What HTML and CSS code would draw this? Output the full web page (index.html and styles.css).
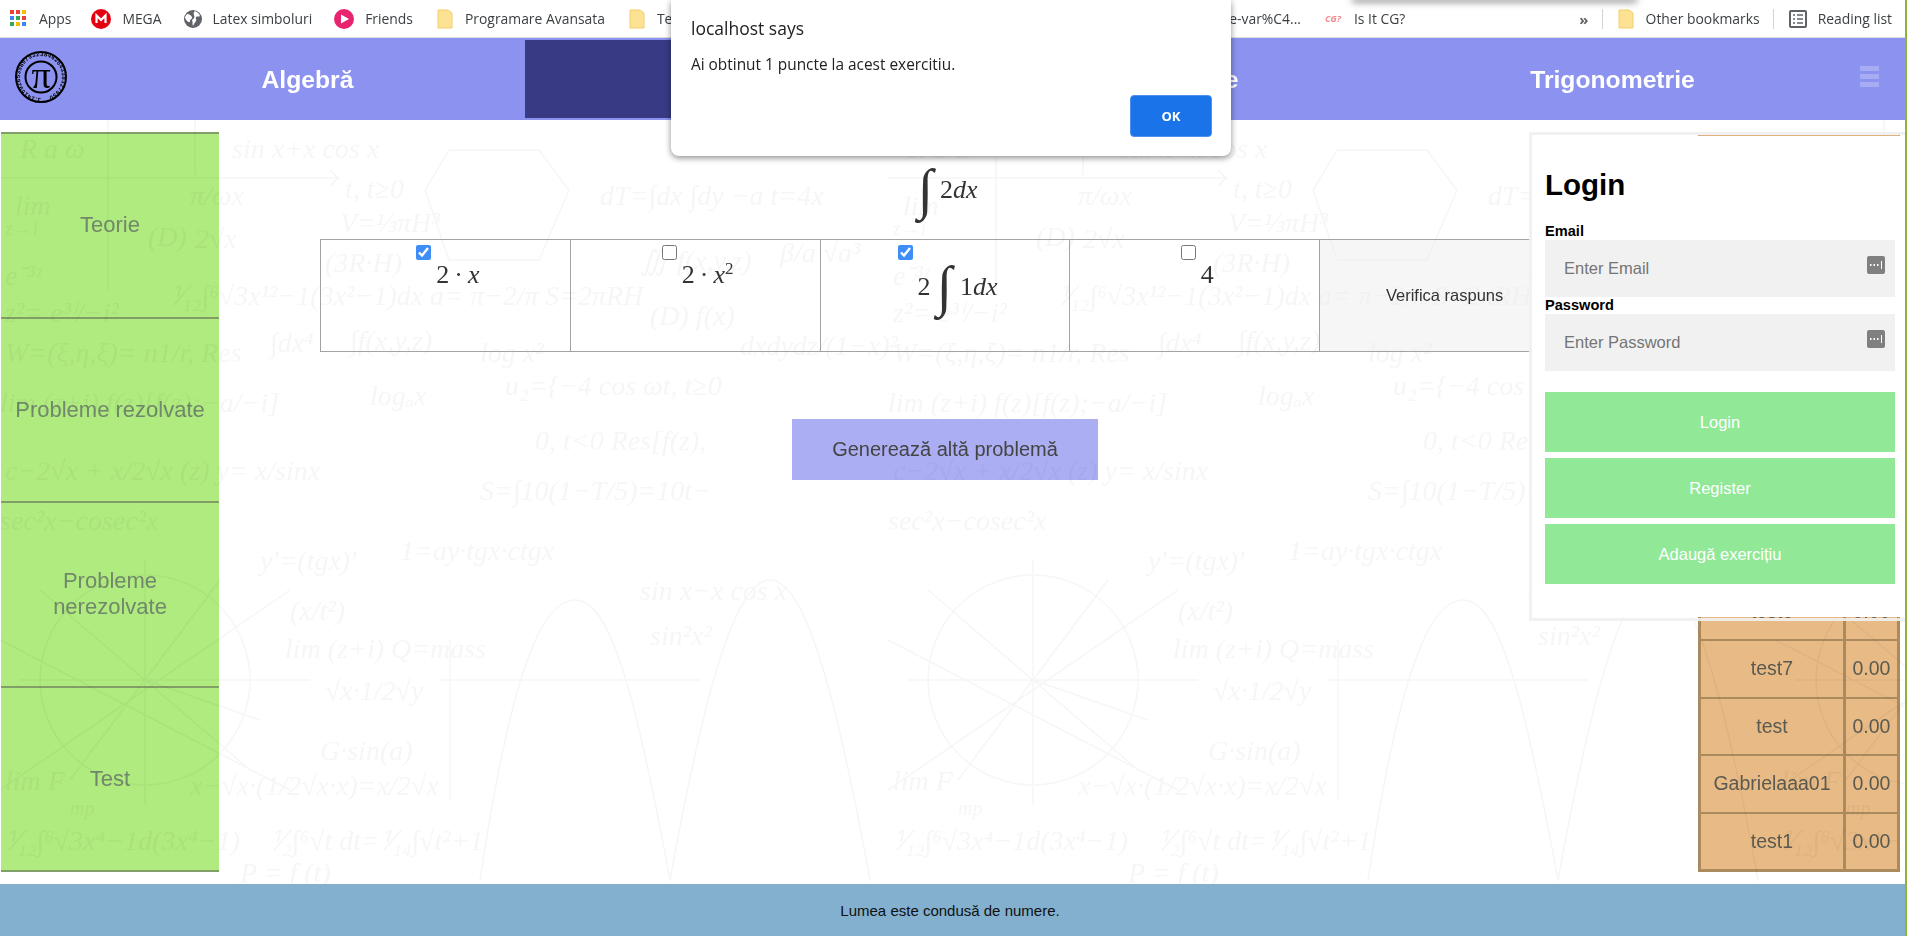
FILE: index.html
```html
<!DOCTYPE html>
<html lang="ro">
<head>
    <meta charset="UTF-8">
    <title>Analiză</title>
    <link rel="stylesheet" href="styles.css">
</head>
<body>
    <!-- bara de bookmarks -->
    <div class="bookmarks">
        <div class="bm apps">
            <svg width="17" height="17" viewBox="0 0 17 17">
                <rect x="0" y="0" width="4" height="4" fill="#ea4335"/><rect x="6" y="0" width="4" height="4" fill="#ea4335"/><rect x="12" y="0" width="4" height="4" fill="#fbbc04"/>
                <rect x="0" y="6" width="4" height="4" fill="#4285f4"/><rect x="6" y="6" width="4" height="4" fill="#34a853"/><rect x="12" y="6" width="4" height="4" fill="#ea4335"/>
                <rect x="0" y="12" width="4" height="4" fill="#34a853"/><rect x="6" y="12" width="4" height="4" fill="#fbbc04"/><rect x="12" y="12" width="4" height="4" fill="#4285f4"/>
            </svg>
            <span>Apps</span>
        </div>
        <div class="bm mega">
            <svg width="20" height="20" viewBox="0 0 20 20">
                <circle cx="10" cy="10" r="10" fill="#e3000f"/>
                <path d="M5.500 14V6.500L10 11l4.500-4.500V14" fill="none" stroke="#fff" stroke-width="2.200"/>
            </svg>
            <span>MEGA</span>
        </div>
        <div class="bm latex">
            <svg width="18" height="18" viewBox="0 0 18 18">
                <circle cx="9" cy="9" r="9" fill="#5f6368"/>
                <path d="M3 4c2 0 4 1 5 3s-2 2-2 4-2 1-3 0-2-3-2-4zM11 1c2 1 4 2 5 5-1 1-3 0-4 1s1 3 0 4-2 3-3 5c-1-2 0-4-1-6 2-1 3-3 2-5s0-3 1-4z" fill="#fff"/>
            </svg>
            <span>Latex simboluri</span>
        </div>
        <div class="bm friends">
            <svg width="20" height="20" viewBox="0 0 20 20">
                <circle cx="10" cy="10" r="10" fill="#e8246e"/>
                <path d="M7 5.500l8 4.500-8 4.500z" fill="#fff"/>
            </svg>
            <span>Friends</span>
        </div>
        <div class="bm prog">
            <svg class="folder" width="16" height="20" viewBox="0 0 16 20"><path d="M1 1h10l4 3v15H1z" fill="#fde293" stroke="#f2d06b"/></svg>
            <span>Programare Avansata</span>
        </div>
        <div class="bm tehnici">
            <svg class="folder" width="16" height="20" viewBox="0 0 16 20"><path d="M1 1h10l4 3v15H1z" fill="#fde293" stroke="#f2d06b"/></svg>
            <span>Te</span>
        </div>
        <div class="bm long"><span>e-var%C4...</span></div>
        <div class="bm cg">
            <span class="cg-logo">CG?</span>
            <span>Is It CG?</span>
        </div>
        <div class="more">»</div>
        <div class="bar-sep"></div>
        <div class="bm other">
            <svg class="folder" width="16" height="20" viewBox="0 0 16 20"><path d="M1 1h10l4 3v15H1z" fill="#fde293" stroke="#f2d06b"/></svg>
            <span>Other bookmarks</span>
        </div>
        <div class="bar-sep"></div>
        <div class="bm reading">
            <svg width="18" height="18" viewBox="0 0 18 18">
                <rect x="1" y="1" width="16" height="16" rx="1" fill="none" stroke="#5f6368" stroke-width="2"/>
                <path d="M4 5h2M8 5h6M4 9h2M8 9h6M4 13h2M8 13h6" stroke="#5f6368" stroke-width="1.500"/>
            </svg>
            <span>Reading list</span>
        </div>
    </div>

    <!-- meniu -->
    <nav class="topnav">
        <div class="logo">
            <svg width="54" height="54" viewBox="0 0 54 54">
                <defs><path id="digits" d="M27 48a21 21 0 1 1 0.010 0"/></defs>
                <circle cx="27" cy="27" r="25" fill="none" stroke="#000" stroke-width="2"/>
                <circle cx="27" cy="27" r="15.500" fill="none" stroke="#000" stroke-width="2"/>
                <text class="logo-digits"><textPath href="#digits">3.14159265358979323846264338327950</textPath></text>
                <text class="logo-pi" x="27" y="38" text-anchor="middle">π</text>
            </svg>
        </div>
        <a class="tab">Algebră</a>
        <a class="tab active" aria-label="Analiză"></a>
        <a class="tab">Geometrie</a>
        <a class="tab">Trigonometrie</a>
        <div class="menu-icon"><span></span><span></span><span></span></div>
    </nav>

    <div class="content">
        <!-- fundal cu formule -->
        <svg class="formulas" width="1908" height="764" viewBox="0 120 1908 764">
            <defs>
                <g id="tile">
                    <text x="20" y="158">R a ω</text>
                    <text x="232" y="158">sin x+x cos x</text>
                    <path d="M0 178H340M108 120V290M195 120V175M330 170l8 8-8 8"/>
                    <text x="15" y="215">lim</text>
                    <text class="small" x="5" y="235">z→i</text>
                    <text x="190" y="205">π/ωx</text>
                    <text x="195" y="248">2√x</text>
                    <text x="148" y="246">(D)</text>
                    <text x="345" y="198">t, t≥0</text>
                    <text x="340" y="232">V=⅓πH³</text>
                    <path d="M425 190l24-40 90 0 30 40-30 70-90 0z"/>
                    <text x="600" y="205">dT=∫dx ∫dy −a t=4x</text>
                    <text x="640" y="270">∭ f(x,y,z)</text>
                    <text x="325" y="272">(3R·H)</text>
                    <text x="780" y="262">β/a √a³</text>
                    <text x="5" y="285">e⁻³ᶻ</text>
                    <text x="5" y="322">z²= e³ⁱ/−i²</text>
                    <text x="170" y="305">⅟₁₂∫⁶√3x¹²−1(3x²−1)dx</text>
                    <text x="430" y="305">a= π−2/π</text>
                    <text x="545" y="305">S=2πRH</text>
                    <text x="650" y="325">(D) f(x)</text>
                    <text x="740" y="355">dxdydz/(1−x)²</text>
                    <text x="5" y="362">W=(ξ,η,ξ)= n1/r, Res</text>
                    <text x="270" y="352">∫dx⁴</text>
                    <text x="350" y="350">∫f(x,y,z)</text>
                    <text x="480" y="362">log x²</text>
                    <text x="0" y="412">lim (z+i) f(z)[f(z);−a/−i]</text>
                    <text x="370" y="405">logₐx</text>
                    <text x="505" y="395">u₂={−4 cos ωt, t≥0</text>
                    <text x="535" y="450">0, t&lt;0 Res[f(z),</text>
                    <text x="5" y="480">c−2√x + x/2√x (z) y= x/sinx</text>
                    <text x="480" y="500">S=∫10(1−T/5)=10t−</text>
                    <text x="0" y="530">sec²x−cosec²x</text>
                    <text x="400" y="560">1=ay·tgx·ctgx</text>
                    <text x="260" y="570">y'=(tgx)'</text>
                    <text x="640" y="600">sin x−x cos x</text>
                    <text x="650" y="645">sin²x²</text>
                    <text x="290" y="620">(x/t²)</text>
                    <text x="285" y="658">lim (z+i) Q=mass</text>
                    <text x="325" y="700">√x·1/2√y</text>
                    <text x="320" y="760">G·sin(a)</text>
                    <text x="5" y="790">lim F</text>
                    <text class="small" x="70" y="815">mp</text>
                    <text x="190" y="795">x−√x·(1/2√x·x)=x/2√x</text>
                    <text x="5" y="850">⅟₁₂∫⁶√3x⁴−1d(3x⁴−1)</text>
                    <text x="270" y="850">⅟₂∫⁶√t dt=⅟₁₄∫√t²+1</text>
                    <text x="240" y="882">P = f (t)</text>
                    <path d="M0 640L290 790M0 790L290 590M145 560V805M40 590L250 770M20 680H310M145 680L70 780M145 680L220 580M145 680L260 720"/>
                    <circle cx="145" cy="680" r="105"/>
                    <path d="M440 680H700M450 800V640M670 880c40-220 70-300 100-300s60 80 100 300M480 880c30-200 60-280 95-280s60 90 95 280"/>
                </g>
            </defs>
            <use href="#tile" x="0"/>
            <use href="#tile" x="888"/>
            <use href="#tile" x="1776"/>
        </svg>

        <aside class="sidebar">
            <a class="side-item">Teorie</a>
            <a class="side-item">Probleme rezolvate</a>
            <a class="side-item">Probleme nerezolvate</a>
            <a class="side-item">Test</a>
        </aside>

        <main class="exercise">
            <div class="formula question"><span class="int">∫</span><span>2<i>dx</i></span></div>
            <table class="answers">
                <tr>
                    <td><div class="answer"><input type="checkbox" checked><div class="formula"><span>2</span><span class="dot">·</span><i>x</i></div></div></td>
                    <td><div class="answer"><input type="checkbox"><div class="formula"><span>2</span><span class="dot">·</span><i>x</i><sup>2</sup></div></div></td>
                    <td><div class="answer"><input type="checkbox" checked><div class="formula"><span>2</span><span class="int wide">∫</span><span>1<i>dx</i></span></div></div></td>
                    <td><div class="answer"><input type="checkbox"><div class="formula"><span>4</span></div></div></td>
                    <td class="verify">Verifica raspuns</td>
                </tr>
            </table>
            <button class="generate">Generează altă problemă</button>
        </main>

        <aside class="ranking">
            <table>
                <tr><td>Nume</td><td>Scor</td></tr>
                <tr><td>Andrei</td><td>9.50</td></tr>
                <tr><td>Maria</td><td>8.00</td></tr>
                <tr><td>test2</td><td>6.00</td></tr>
                <tr><td>test3</td><td>4.00</td></tr>
                <tr><td>test4</td><td>2.00</td></tr>
                <tr><td>test5</td><td>1.00</td></tr>
                <tr><td>test8</td><td>0.50</td></tr>
                <tr><td>test6</td><td>0.00</td></tr>
                <tr><td>test7</td><td>0.00</td></tr>
                <tr><td>test</td><td>0.00</td></tr>
                <tr><td>Gabrielaaa01</td><td>0.00</td></tr>
                <tr><td>test1</td><td>0.00</td></tr>
            </table>
        </aside>

        <!-- peste clasament -->
        <div class="login-panel">
            <div class="login-inner">
                <h2>Login</h2>
                <label>Email</label>
                <div class="field">
                    <input type="text" placeholder="Enter Email">
                    <svg class="key" width="18" height="18" viewBox="0 0 18 18"><rect width="18" height="18" rx="2" fill="#808080"/><path d="M3 9h1.500M6.500 9H8M10 9h1.500" stroke="#fff" stroke-width="2"/><path d="M14.500 5v8" stroke="#fff"/></svg>
                </div>
                <label>Password</label>
                <div class="field">
                    <input type="text" placeholder="Enter Password">
                    <svg class="key" width="18" height="18" viewBox="0 0 18 18"><rect width="18" height="18" rx="2" fill="#808080"/><path d="M3 9h1.500M6.500 9H8M10 9h1.500" stroke="#fff" stroke-width="2"/><path d="M14.500 5v8" stroke="#fff"/></svg>
                </div>
                <button class="login-btn first">Login</button>
                <button class="login-btn">Register</button>
                <button class="login-btn">Adaugă exercițiu</button>
            </div>
        </div>
    </div>

    <footer class="page-footer">Lumea este condusă de numere.</footer>

    <!-- alert-ul browserului -->
    <div class="dialog">
        <div class="dialog-title">localhost says</div>
        <div class="dialog-text">Ai obtinut 1 puncte la acest exercitiu.</div>
        <div class="dialog-actions"><button class="ok">OK</button></div>
    </div>
    <div class="window-shadow"></div>
    <div class="screen-edge"></div>
</body>
</html>
```
FILE: styles.css
```css
html, body {
    margin: 0;
    height: 936px;
    overflow: hidden;
}

body {
    position: relative;
    display: flex;
    flex-direction: column;
    background-color: white;
    font-family: "Liberation Sans", Arial, sans-serif;
}

/* bookmarks */
.bookmarks {
    height: 37px;
    flex: none;
    border-bottom: 1px solid #dedfe1;
    display: flex;
    align-items: center;
    padding-right: 16px;
    font-family: "Open Sans", sans-serif;
    font-size: 13.9px;
    color: #3c4043;
    white-space: nowrap;
}

.bm {
    display: flex;
    align-items: center;
    flex: none;
}

.apps { margin-left: 10px; gap: 12px; }
.mega { margin-left: 20px; gap: 11px; }
.latex { margin-left: 22px; gap: 11px; }
.friends { margin-left: 22px; gap: 11px; }
.prog { margin-left: 24px; gap: 12px; }
.tehnici { margin-left: 24px; gap: 12px; }
.long { flex: 1; justify-content: flex-end; }
.cg { margin-left: 24px; gap: 9px; }
.other { gap: 12px; margin-left: 15px; }
.reading { gap: 11px; margin-left: 15px; }

.cg-logo {
    width: 20px;
    font-size: 9px;
    font-style: italic;
    font-weight: bold;
    color: #f28b92;
}

.more {
    margin-left: 174px;
    font-size: 15px;
    font-weight: bold;
    color: #5f6368;
}

.bar-sep {
    width: 1px;
    height: 20px;
    margin-left: 13px;
    background-color: #d3d4d6;
}

/* meniu */
.topnav {
    height: 82px;
    flex: none;
    background-color: #8b92ef;
    display: flex;
    align-items: stretch;
    position: relative;
}

.logo {
    width: 90px;
    flex: none;
    padding: 12px 0 0 14px;
    box-sizing: border-box;
}

.logo-digits {
    font-family: "Liberation Sans", sans-serif;
    font-size: 6px;
    font-weight: bold;
    letter-spacing: 0.35px;
}

.logo-pi {
    font-family: "Liberation Serif", serif;
    font-size: 38px;
}

.tab {
    width: 435px;
    flex: none;
    display: flex;
    align-items: center;
    justify-content: center;
    padding-top: 2px;
    box-sizing: border-box;
    font-size: 24.7px;
    font-weight: bold;
    color: white;
}

.tab.active {
    background-color: #383b84;
    margin: 2px 0;
}

.menu-icon {
    margin: 28px 0 0 30px;
    width: 19px;
    display: flex;
    flex-direction: column;
    gap: 3px;
}

.menu-icon span {
    height: 5px;
    background-color: rgba(255, 255, 255, 0.25);
}

/* continut */
.content {
    flex: 1;
    position: relative;
    display: flex;
    align-items: flex-start;
    min-height: 0;
}

.formulas {
    position: absolute;
    top: 0;
    left: 0;
}

.formulas text {
    font-family: "Liberation Serif", serif;
    font-style: italic;
    font-size: 28px;
    fill: #f6f6f6;
}

.formulas text.small {
    font-size: 20px;
}

.formulas path,
.formulas circle {
    fill: none;
    stroke: #f6f6f6;
    stroke-width: 1.5;
}

.sidebar {
    width: 218px;
    flex: none;
    margin: 12px 0 0 1px;
    position: relative;
    mix-blend-mode: multiply;
    border-top: 2px solid #7f9f66;
}

.side-item {
    height: 182.5px;
    padding: 0 11px;
    border-bottom: 2px solid #7f9f66;
    background-color: #afeb7f;
    display: flex;
    align-items: center;
    justify-content: center;
    text-align: center;
    font-size: 22px;
    line-height: 26px;
    color: #71886a;
}

.exercise {
    width: 1250px;
    flex: none;
    margin-left: 101px;
    position: relative;
    display: flex;
    flex-direction: column;
    align-items: center;
}

.formula {
    display: flex;
    align-items: center;
    justify-content: center;
    min-height: 30px;
    font-family: "Liberation Serif", serif;
    font-size: 26px;
    color: #333;
}

.question {
    margin-top: 43px;
    height: 53px;
    margin-bottom: 23px;
}

.int {
    font-size: 56px;
    line-height: 53px;
    margin: 0 7px 0 5px;
}

.int.wide {
    margin: 0 8px 0 6px;
}

.dot {
    margin: 0 5px;
}

.formula sup {
    font-size: 17px;
    line-height: 1;
    align-self: flex-start;
}

.answers {
    width: 1250px;
    border-collapse: collapse;
    table-layout: fixed;
}

.answers td {
    height: 112px;
    padding: 5px 0 0;
    box-sizing: border-box;
    border: 1px solid #a3a3a3;
    text-align: center;
    vertical-align: top;
}

.answer {
    display: inline-flex;
    flex-direction: column;
    align-items: flex-start;
}

.answer input {
    width: 15px;
    height: 15px;
    margin: 0 0 0 5px;
    accent-color: #3f8ef7;
}

.answer .formula {
    padding-left: 25px;
}

.answers td.verify {
    padding: 0;
    vertical-align: middle;
    background-color: rgba(235, 235, 235, 0.45);
    font-size: 16.5px;
    color: #333;
}

.generate {
    margin-top: 67px;
    width: 306px;
    height: 61px;
    border: none;
    background-color: #abaef2;
    font-family: "Liberation Sans", sans-serif;
    font-size: 20px;
    color: #444;
    mix-blend-mode: multiply;
}

/* clasament */
.ranking {
    width: 202px;
    flex: none;
    margin: 15px 0 0 128px;
    mix-blend-mode: multiply;
}

.ranking table {
    width: 202px;
    border-spacing: 0;
    border: 3px solid #ab8a5d;
    border-top-color: #e0b280;
    background-color: #e8ba85;
    box-sizing: border-box;
    font-size: 19.5px;
    color: #5a5a50;
    text-align: center;
}

.ranking td {
    height: 55.5px;
    padding: 0;
    border-bottom: 2px solid #ab8a5d;
}

.ranking tr:first-child td {
    height: 41px;
}

.ranking tr:last-child td {
    border-bottom: none;
    height: 55px;
}

.ranking td:first-child {
    width: 142px;
    border-right: 3px solid #ab8a5d;
}

/* login */
.login-panel {
    position: absolute;
    left: 1529px;
    top: 12px;
    width: 376px;
    box-sizing: border-box;
    border: 3px solid rgba(240, 240, 240, 0.92);
    border-right: none;
    padding: 1px 0;
}

.login-inner {
    background-color: white;
    height: 481px;
    padding: 0 10px 0 13px;
    box-sizing: border-box;
    display: flex;
    flex-direction: column;
}

.login-inner h2 {
    margin: 31px 0 0;
    height: 56px;
    line-height: 36px;
    font-size: 29.5px;
    color: black;
}

.login-inner label {
    height: 17px;
    line-height: 17px;
    font-size: 14.6px;
    font-weight: bold;
    color: black;
}

.field {
    position: relative;
    height: 57px;
}

.field input {
    width: 100%;
    height: 100%;
    box-sizing: border-box;
    border: none;
    padding: 0 0 0 19px;
    background-color: #f1f1f1;
    font-family: "Liberation Sans", sans-serif;
    font-size: 16.5px;
}

.key {
    position: absolute;
    right: 10px;
    top: 16px;
}

.login-btn {
    height: 60px;
    margin-bottom: 6px;
    border: none;
    background-color: #91e997;
    font-family: "Liberation Sans", sans-serif;
    font-size: 16.5px;
    color: white;
}

.login-btn.first {
    margin-top: 21px;
}

/* footer */
.page-footer {
    height: 52px;
    flex: none;
    position: relative;
    background-color: #83b0ce;
    text-align: center;
    line-height: 54px;
    font-size: 15px;
    color: #111;
    padding-right: 8px;
}

/* alert */
.dialog {
    position: absolute;
    left: 671px;
    top: 0;
    width: 560px;
    height: 156px;
    box-sizing: border-box;
    padding: 17px 20px 0;
    background-color: white;
    border-radius: 0 0 8px 8px;
    box-shadow: 0 2px 6px rgba(0, 0, 0, 0.45);
    font-family: "Open Sans", sans-serif;
    color: #202124;
}

.dialog-title {
    font-size: 17.5px;
    line-height: 22px;
}

.dialog-text {
    margin-top: 15.5px;
    font-size: 15.4px;
    line-height: 20px;
}

.dialog-actions {
    display: flex;
    justify-content: flex-end;
    margin: 20.5px -1px 0 0;
}

.ok {
    width: 82px;
    height: 42px;
    border: 1px solid #4d90ee;
    border-radius: 4px;
    background-color: #1a73e8;
    font-family: "Open Sans", sans-serif;
    font-size: 13px;
    font-weight: bold;
    color: white;
}

.window-shadow {
    position: absolute;
    left: 1352px;
    top: -4px;
    width: 285px;
    height: 4px;
    box-shadow: 0 2px 7px rgba(0, 0, 0, 0.55);
}

.screen-edge {
    position: absolute;
    top: 0;
    left: 1905px;
    width: 1px;
    height: 936px;
    border-left: 2px solid #8fb339;
    background-color: white;
}
```
